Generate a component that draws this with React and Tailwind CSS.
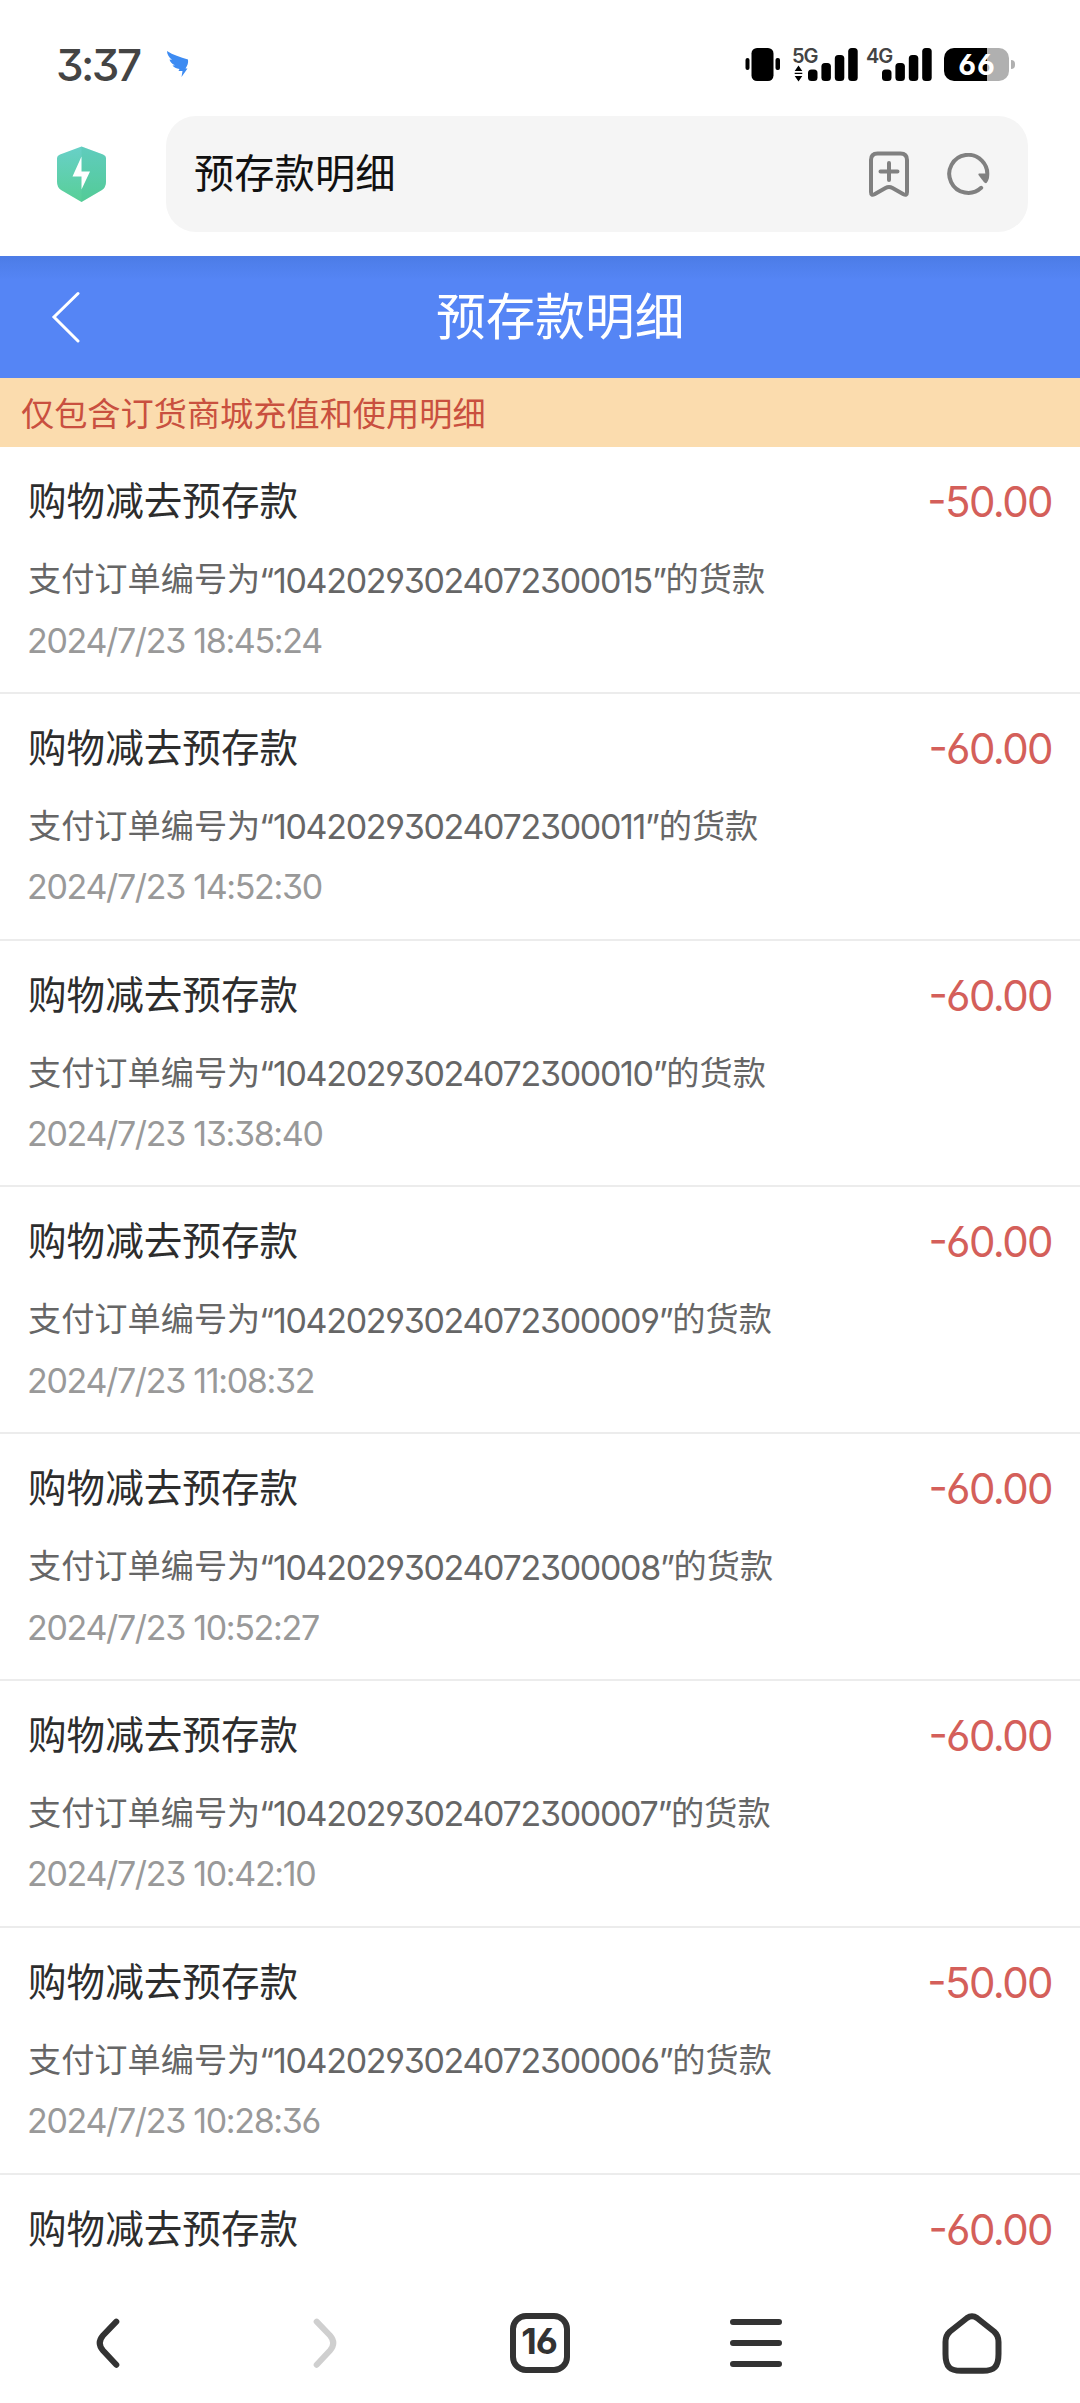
import React from "react";

const records = [
  { amount: "50.00", order: "10420293024072300015", time: "2024/7/23 18:45:24" },
  { amount: "60.00", order: "10420293024072300011", time: "2024/7/23 14:52:30" },
  { amount: "60.00", order: "10420293024072300010", time: "2024/7/23 13:38:40" },
  { amount: "60.00", order: "10420293024072300009", time: "2024/7/23 11:08:32" },
  { amount: "60.00", order: "10420293024072300008", time: "2024/7/23 10:52:27" },
  { amount: "60.00", order: "10420293024072300007", time: "2024/7/23 10:42:10" },
  { amount: "50.00", order: "10420293024072300006", time: "2024/7/23 10:28:36" },
  { amount: "60.00" },
];

const Signal = ({ label, arrows }) => (
  <div className="relative w-[66px] h-[34px]">
    <span className="absolute left-0 top-0 text-[20px] leading-[17px] font-semibold tracking-[-1px] text-[#444]">
      {label}
    </span>
    <svg width="66" height="34" viewBox="0 0 66 34" fill="#000" className="absolute inset-0">
      {arrows && <path d="M6.5 17.5L10.3 23H2.7ZM6.5 33.5L10.3 28H2.7ZM2.7 24.7h7.6v1.4H2.7Z" />}
      <rect x="16" y="21.5" width="9.5" height="11.5" rx="3.5" />
      <rect x="29.4" y="15" width="9.5" height="18" rx="3.5" />
      <rect x="42.8" y="7" width="9.5" height="26" rx="3.5" />
      <rect x="56.2" y="0" width="9.5" height="33" rx="3.5" />
    </svg>
  </div>
);

const StatusBar = () => (
  <div className="h-[116px] flex items-start pl-[56px] pr-[65px] pt-[48px]">
    <span className="text-[44px] leading-[35px] font-medium text-[#444] w-[86px] tracking-[-2.600px] whitespace-nowrap">
      3:37
    </span>
    <svg width="24" height="30" viewBox="0 0 24 30" className="ml-[24px] mt-[2px]">
      <path
        d="M1 1C7 5 14 7 22 9.500C22.500 13 21.500 15.500 19.500 18.500H21.500L15.500 27L16.500 21H12.500L13.500 19C10 18.500 8 17.500 6.500 15.500L9 15.300C6 14 4 12 3.500 9.500L6 9.700C3 7.500 1 4.500 1 1Z"
        fill="#3d8bf2"
      />
    </svg>
    <div className="ml-auto flex items-start">
      {/* vibrate */}
      <svg width="36" height="34" viewBox="0 0 36 34" fill="#000" className="mr-[11px]">
        <rect x="0.500" y="10" width="4" height="12" rx="2" />
        <rect x="6.500" y="0" width="22" height="33" rx="5.500" />
        <rect x="30.500" y="10" width="4.500" height="12" rx="2" />
      </svg>
      <div className="mr-[8px]">
        <Signal label="5G" arrows />
      </div>
      <div className="mr-[12px]">
        <Signal label="4G" />
      </div>
      {/* battery */}
      <div className="w-[65px] h-[33px] rounded-[10px] bg-[linear-gradient(to_right,#000_66%,#b0b0b0_66%)] flex items-center justify-center text-white text-[29px] leading-none font-bold tracking-[1px] pl-px">
        66
      </div>
      <div className="ml-[2px] mt-[12px] w-[4px] h-[9px] rounded-r-full bg-[#b0b0b0]" />
    </div>
  </div>
);

const AddressBar = () => (
  <div className="h-[140px] flex items-start pl-[57px] pr-[52px]">
    <svg width="49" height="57" viewBox="0 0 49 57" className="mt-[30px] mr-[60px]">
      <defs>
        <linearGradient id="shield" x1="0" y1="0" x2="0" y2="1">
          <stop offset="0" stopColor="#68d0c8" />
          <stop offset="1" stopColor="#58cf97" />
        </linearGradient>
      </defs>
      <path d="M24.500 0.500L46 8.500Q49 9.700 49 12V36Q49 41 45 44L24.500 56L4 44Q0 41 0 36V12Q0 9.700 3 8.500Z" fill="url(#shield)" />
      <path d="M24.500 0.500L46 8.500Q49 9.700 49 12V36Q49 41 45 44L24.500 56Z" fill="#3fbf94" fillOpacity="0.2" />
      <path d="M24.500 10.500V25.500H33L24.500 43.500V30.500H15.500Z" fill="#fff" />
    </svg>
    <div className="flex-1 h-[116px] rounded-[30px] bg-[#f5f5f5] flex items-center pl-[28px] pr-[38px]">
      <span className="text-[40.300px] leading-none text-[#111] mr-auto pt-px">预存款明细</span>
      <svg width="42" height="46" viewBox="0 0 42 46" fill="none" stroke="#808080" strokeWidth="4" strokeLinecap="round" strokeLinejoin="round" className="mr-[37px]">
        <path d="M3 9Q3 2.500 9.500 2.500H32.500Q39 2.500 39 9V41Q39 45 35.500 43.200L24.500 37Q21 35 17.500 37L6.500 43.200Q3 45 3 41Z" />
        <path d="M21 12V29M12.500 20.500H29.500" />
      </svg>
      {/* reload */}
      <svg width="43" height="42" viewBox="0 0 43 42" className="mr-[0.500px]">
        <path d="M34.200 34.800A19 19 0 1 1 40 24" fill="none" stroke="#808080" strokeWidth="4" strokeLinecap="round" />
        <path d="M32 20.500H42Q42.500 27 39.500 30Q38 30.500 36.800 29L31.500 22Q31 20.800 32 20.500Z" fill="#808080" />
      </svg>
    </div>
  </div>
);

const Record = ({ item }) => (
  <div className="h-[246.800px] shrink-0 border-b-[2.500px] border-[#ececec] px-[28px] pt-[30px]">
    <div className="h-[50px] flex items-center justify-between">
      <span className="text-[38.600px] text-[#2d2d2d]">购物减去预存款</span>
      <span className="text-[42px] text-[#d45f5a] tracking-[-1.600px] -mt-px">
        <span className="relative -top-[2px]">-</span>
        {item.amount}
      </span>
    </div>
    {item.order && (
      <>
        <div className="mt-[28px] h-[50px] flex items-center text-[33.200px] text-[#666] whitespace-nowrap">
          支付订单编号为
          <span className="text-[34px] tracking-[-1.320px] -ml-px">“{item.order}”</span>
          的货款
        </div>
        <div className="mt-[10px] h-[50px] flex items-center text-[34px] text-[#999] tracking-[-1.330px] -ml-px">
          {item.time}
        </div>
      </>
    )}
  </div>
);

const BottomBar = () => (
  <div className="h-[133px] shrink-0 bg-white grid grid-cols-5 justify-items-center pt-[43px] text-[#333]">
    <svg width="60" height="60" viewBox="0 0 60 60" fill="none" stroke="currentColor" strokeWidth="6" strokeLinecap="round">
      <path d="M38.300 8.700L25 22.500Q18.500 30 25 37.500L38.300 51.700" />
    </svg>
    <svg width="60" height="60" viewBox="0 0 60 60" fill="none" stroke="#cfcfcf" strokeWidth="6" strokeLinecap="round">
      <path d="M22.700 8.700L36 22.500Q42.500 30 36 37.500L22.700 51.700" />
    </svg>
    <div className="w-[60px] h-[60px] border-[6px] border-current rounded-[16px] flex items-center justify-center text-[36px] leading-none font-bold tracking-[-1px] pb-[5px] pr-[2px]">
      16
    </div>
    <svg width="60" height="60" viewBox="0 0 60 60" stroke="currentColor" strokeWidth="6" strokeLinecap="round">
      <path d="M7 9H53M7 30H53M7 51H53" />
    </svg>
    <svg width="60" height="62" viewBox="0 0 60 62" fill="none" stroke="currentColor" strokeWidth="6" strokeLinejoin="round">
      <path d="M25 5Q30 1.500 35 5L52 18.500Q56.500 22.500 56.500 29V41C56.500 54 52 57.800 41 57.800H19C8 57.800 3.500 54 3.500 41V29Q3.500 22.500 8 18.500Z" />
    </svg>
  </div>
);

const App = () => {
  return (
    <div className="w-[1080px] h-[2403px] overflow-hidden flex flex-col bg-white font-['Inter','Noto_Sans_CJK_SC',sans-serif] [font-feature-settings:'cv03','cv04','cv09']">
      <StatusBar />
      <AddressBar />

      {/* Page header */}
      <div className="h-[122px] shrink-0 flex items-center bg-[linear-gradient(#4c7ce6,#5585f5_24px)] pl-[51px]">
        <svg width="30" height="52" viewBox="0 0 30 52" fill="none" stroke="#fff" strokeWidth="3" strokeLinecap="round">
          <path d="M27 2.500L3 26L27 50" />
        </svg>
        <h1 className="ml-[355px] text-[49.700px] leading-none text-white pt-[2px]">预存款明细</h1>
      </div>

      <div className="h-[69px] shrink-0 flex items-center bg-[#fbdcae] pl-[21px] pt-[4px] text-[33.200px] text-[#c9503f]">
        仅包含订货商城充值和使用明细
      </div>

      <div className="flex-1 min-h-0 overflow-hidden flex flex-col">
        {records.map((item, i) => (
          <Record key={i} item={item} />
        ))}
      </div>

      <BottomBar />
    </div>
  );
};

export default App;
